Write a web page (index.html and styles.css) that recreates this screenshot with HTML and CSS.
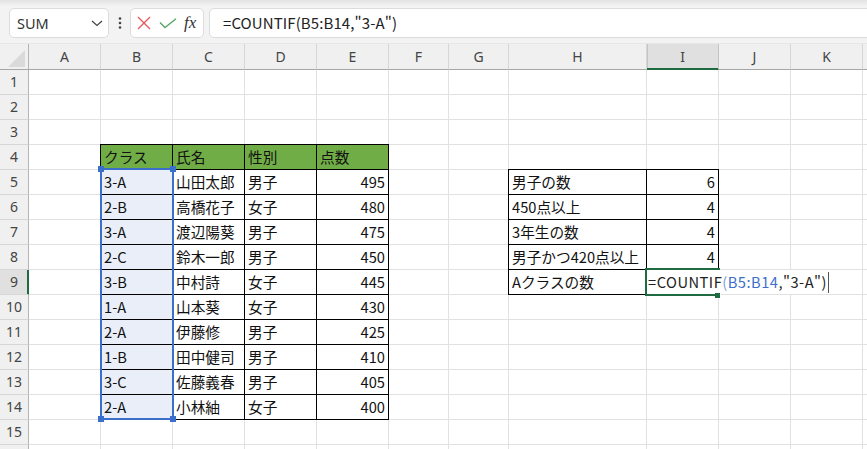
FILE: index.html
```html
<!DOCTYPE html>
<html lang="ja">
<head>
    <meta charset="UTF-8">
    <title>COUNTIF</title>
    <link rel="stylesheet" href="styles.css">
</head>
<body>
<div class="toolbar">
    <div class="namebox">
        <span>SUM</span>
        <svg class="chevron" width="12" height="7" viewBox="0 0 12 7"><path d="M1 1 L6 5.5 L11 1" fill="none" stroke="#444" stroke-width="1.2"/></svg>
    </div>
    <svg class="more" width="4" height="12" viewBox="0 0 4 12">
        <circle cx="2" cy="1.5" r="1.3" fill="#444"/>
        <circle cx="2" cy="6" r="1.3" fill="#444"/>
        <circle cx="2" cy="10.5" r="1.3" fill="#444"/>
    </svg>
    <div class="fx-buttons">
        <svg width="14" height="14" viewBox="0 0 14 14"><path d="M1 1 L13 13 M13 1 L1 13" stroke="#e25b5b" stroke-width="1.4"/></svg>
        <svg width="18" height="11" viewBox="0 0 18 11"><path d="M1 4.5 L6 9.5 L17 0.8" fill="none" stroke="#58a768" stroke-width="1.4"/></svg>
        <span class="fx">fx</span>
    </div>
    <div class="formula">=COUNTIF(B5:B14,"3-A")</div>
</div>

<div class="sheet-wrap">
    <div class="sheet" id="sheet"></div>

    <!-- range picked up by the formula -->
    <div class="range">
        <i class="h tl"></i><i class="h tr"></i><i class="h bl"></i><i class="h br"></i>
    </div>

    <!-- cell I9 in edit mode -->
    <div class="active-cell"></div>
    <div class="editor">=COUNTIF<span class="paren">(</span><span class="ref">B5:B14</span>,"3-A")<i class="caret"></i></div>
    <div class="fill-handle"></div>
</div>

<script>
    const sheet = document.getElementById('sheet');
    const letters = ['A', 'B', 'C', 'D', 'E', 'F', 'G', 'H', 'I', 'J', 'K', ''];

    const students = [
        ['クラス', '氏名', '性別', '点数'],
        ['3-A', '山田太郎', '男子', 495],
        ['2-B', '高橋花子', '女子', 480],
        ['3-A', '渡辺陽葵', '男子', 475],
        ['2-C', '鈴木一郎', '男子', 450],
        ['3-B', '中村詩', '女子', 445],
        ['1-A', '山本葵', '女子', 430],
        ['2-A', '伊藤修', '男子', 425],
        ['1-B', '田中健司', '男子', 410],
        ['3-C', '佐藤義春', '男子', 405],
        ['2-A', '小林紬', '女子', 400]
    ];

    const summary = [
        ['男子の数', 6],
        ['450点以上', 4],
        ['3年生の数', 4],
        ['男子かつ420点以上', 4],
        ['Aクラスの数', '']
    ];

    // key "col,row" -> {text, cls}; col 0 is A
    const cells = {};
    students.forEach((row, i) => {
        row.forEach((v, j) => {
            let cls = 'bd';
            if (i === 0) cls += ' green';
            if (typeof v === 'number') cls += ' num';
            if (j === 0 && i > 0) cls += ' sel';
            cells[(j + 1) + ',' + (i + 4)] = { text: v, cls: cls };
        });
    });
    summary.forEach((row, i) => {
        cells['7,' + (i + 5)] = { text: row[0], cls: 'bd' };
        cells['8,' + (i + 5)] = { text: row[1], cls: 'bd num' };
    });

    function add(cls, text) {
        const d = document.createElement('div');
        d.className = cls;
        d.textContent = text;
        sheet.appendChild(d);
    }

    add('corner', '');
    letters.forEach(l => add('colhead' + (l === 'I' ? ' active' : ''), l));

    for (let r = 1; r <= 16; r++) {
        add('rowhead' + (r === 9 ? ' active' : ''), r < 16 ? r : '');
        for (let c = 0; c < letters.length; c++) {
            const v = cells[c + ',' + r];
            add('cell' + (v ? ' ' + v.cls : ''), v ? v.text : '');
        }
    }
</script>
</body>
</html>
```

FILE: styles.css
```css
body {
    margin: 0;
    width: 867px;
    height: 449px;
    overflow: hidden;
    background: #fff;
    font-family: "Noto Sans CJK JP", sans-serif;
    color: #222;
}

/* formula bar */
.toolbar {
    display: flex;
    align-items: flex-start;
    height: 44px;
    box-sizing: border-box;
    padding: 8px 0 0 9px;
    background: linear-gradient(#e2e2e2, #f3f3f3 6px);
    border-bottom: 1px solid #e6e6e6;
}

.namebox, .fx-buttons, .formula {
    height: 30px;
    box-sizing: border-box;
    background: #fff;
    border: 1px solid #dcdcdc;
    border-radius: 5px;
}

.namebox {
    width: 100px;
    display: flex;
    align-items: center;
    justify-content: space-between;
    padding: 0 5px 0 7px;
    font-family: "Noto Sans", sans-serif;
    font-size: 14.5px;
    color: #333;
}

.chevron {
    margin-top: 1px;
}

.more {
    margin: 9px 8px 0 9px;
}

.fx-buttons {
    width: 74px;
    display: flex;
    align-items: center;
    gap: 8px;
    padding-left: 6px;
}

.fx {
    font-family: "Liberation Serif", serif;
    font-style: italic;
    font-size: 17px;
    color: #333;
    margin-left: -1px;
}

.formula {
    flex: 1;
    margin: 0 -10px 0 5px;
    padding-left: 13px;
    line-height: 28px;
    font-size: 15px;
    letter-spacing: 0.1px;
    color: #222;
}

/* grid */
.sheet-wrap {
    position: relative;
}

.sheet {
    display: grid;
    grid-template-columns: 29px repeat(5, 72px) 60px 60px 138px 72px 72px 72px 1fr;
    grid-template-rows: 26px;
    grid-auto-rows: 25px;
}

.sheet > div {
    box-sizing: border-box;
    white-space: nowrap;
    overflow: hidden;
}

.corner {
    background: #f0f0f0;
    border-right: 1px solid #b4b4b4;
    border-bottom: 1px solid #a6a6a6;
    position: relative;
}

.corner::after {
    content: "";
    position: absolute;
    right: 3px;
    bottom: 2px;
    border-style: solid;
    border-width: 0 0 17px 17px;
    border-color: transparent transparent #dadada transparent;
}

.colhead {
    background: #f0f0f0;
    border-right: 1px solid #d6d6d6;
    border-bottom: 1px solid #a6a6a6;
    text-align: center;
    line-height: 25px;
    font-family: "Noto Sans", sans-serif;
    font-size: 14px;
    color: #444;
}

.colhead.active {
    background: #e0e0e0;
    border-right-color: #c4c4c4;
    border-bottom-color: #1e6b41;
    box-shadow: inset 0 -1px 0 #1e6b41, inset 1px 0 0 #c4c4c4;
}

.rowhead {
    background: #f0f0f0;
    border-right: 1px solid #b4b4b4;
    border-bottom: 1px solid #d6d6d6;
    text-align: center;
    line-height: 24px;
    font-family: "Noto Sans", sans-serif;
    font-size: 14px;
    color: #444;
}

.rowhead.active {
    background: #e0e0e0;
    border-right-color: #1e6b41;
    box-shadow: inset -1px 0 0 #1e6b41;
}

.cell {
    background: #fff;
    border-right: 1px solid #e1e1e1;
    border-bottom: 1px solid #e1e1e1;
    padding: 0 3px;
    line-height: 24px;
    font-size: 14.67px;
    color: #111;
}

/* cells with a thin black border */
.cell.bd {
    border: 1px solid #000;
    margin: -1px 0 0 -1px;
}

.cell.green {
    background: #70ad47;
}

.cell.num {
    text-align: right;
}

.cell.sel {
    background: #e9eef8;
}

/* formula reference range B5:B14 */
.range {
    position: absolute;
    left: 100px;
    top: 124px;
    width: 74px;
    height: 252px;
    box-sizing: border-box;
    border: 2px solid #3b6fcc;
}

.range .h {
    position: absolute;
    width: 6px;
    height: 6px;
    background: #3b6fcc;
}

.range .tl { left: -4px; top: -4px; }
.range .tr { right: -4px; top: -4px; }
.range .bl { left: -4px; bottom: -4px; }
.range .br { right: -4px; bottom: -4px; }

/* I9 edit box */
.active-cell {
    position: absolute;
    left: 645px;
    top: 224px;
    width: 75px;
    height: 28px;
    box-sizing: border-box;
    border: 2px solid #1e6b41;
}

.editor {
    position: absolute;
    left: 647px;
    top: 226px;
    width: 181px;
    height: 24px;
    padding-left: 1px;
    box-sizing: border-box;
    background: #fff;
    line-height: 24px;
    font-size: 14.67px;
    letter-spacing: 0.5px;
    color: #222;
    white-space: nowrap;
}

.editor .paren {
    color: #7f9fd6;
}

.editor .ref {
    color: #3d6fcc;
}

.editor .caret {
    display: inline-block;
    vertical-align: top;
    margin: 2px 0 0 1px;
    width: 1px;
    height: 21px;
    background: #555;
}

.fill-handle {
    position: absolute;
    left: 715px;
    top: 249px;
    width: 5px;
    height: 5px;
    background: #1e6b41;
    border: 1px solid #fff;
    border-top: none;
    border-left: none;
}
```
